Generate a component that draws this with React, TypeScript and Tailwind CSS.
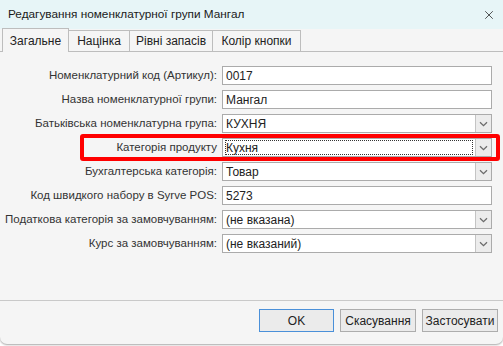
import { X } from 'lucide-react';

type Field = {
  label: string;
  value: string;
  combo?: boolean;
  focused?: boolean;
};

const fields: Field[] = [
  { label: 'Номенклатурний код (Артикул):', value: '0017' },
  { label: 'Назва номенклатурної групи:', value: 'Мангал' },
  { label: 'Батьківська номенклатурна група:', value: 'КУХНЯ', combo: true },
  { label: 'Категорія продукту', value: 'Кухня', combo: true, focused: true },
  { label: 'Бухгалтерська категорія:', value: 'Товар', combo: true },
  { label: 'Код швидкого набору в Syrve POS:', value: '5273' },
  { label: 'Податкова категорія за замовчуванням:', value: '(не вказана)', combo: true },
  { label: 'Курс за замовчуванням:', value: '(не вказаний)', combo: true },
];

const tabs = [
  { name: 'Загальне', w: 'w-[67px]' },
  { name: 'Націнка', w: 'w-[61px]' },
  { name: 'Рівні запасів', w: 'w-[83px]' },
  { name: 'Колір кнопки', w: 'w-[88px]' },
];

function Chevron() {
  return (
    <svg width="9" height="6" viewBox="0 0 9 6" fill="none">
      <path d="M1 1.2 L4.5 4.6 L8 1.2" stroke="#6b6b6b" strokeWidth="1.3" />
    </svg>
  );
}

function Row({ field }: { field: Field }) {
  return (
    <div className="relative flex items-center h-[19px]">
      <div className="w-[218px] shrink-0 pr-[1px] text-right text-[11.5px] text-[#333] whitespace-nowrap">
        {field.label}
      </div>
      <div className="ml-[4px] w-[270px] h-[19px] flex bg-white border border-[#ababab]">
        <div className="flex-1 flex items-center px-[2px] min-w-0">
          <div
            className={`flex-1 h-[15px] flex items-center text-[12px] text-[#222] leading-none pl-[1px] ${
              field.focused ? 'outline-1 outline-dotted outline-[#333] -outline-offset-1' : ''
            }`}
          >
            {field.value}
          </div>
        </div>
        {field.combo && (
          <div className="w-[16px] flex items-center justify-center bg-[#ececec] border-l border-[#c4c4c4]">
            <Chevron />
          </div>
        )}
      </div>
      {field.focused && (
        <div className="absolute left-[80px] top-[-4px] w-[420px] h-[27px] border-4 border-[#ff0000] rounded-[3px] pointer-events-none" />
      )}
    </div>
  );
}

export default function App() {
  return (
    <div className="w-[503px] h-[346px] bg-white overflow-hidden" style={{ fontFamily: '"Liberation Sans", Arial, sans-serif' }}>
      <div className="w-[503px] h-[344px] flex flex-col bg-[#f5f5f5] rounded-b-[7px] shadow-[0_1px_2px_rgba(0,0,0,0.35)] overflow-hidden">
        {/* Title bar */}
        <div className="h-[29px] shrink-0 flex items-center justify-between pl-[8px] pr-[7px] bg-[#e7f5f7]">
          <span className="text-[11.8px] text-[#1a1a1a]">Редагування номенклатурної групи Мангал</span>
          <X size={14} strokeWidth={1.3} className="text-[#222]" />
        </div>

        {/* Tabs */}
        <div className="h-[23px] shrink-0 flex items-end pl-[2px] border-b border-[#bdbdbd] bg-[#f5f5f5]">
          {tabs.map((t, i) =>
            i === 0 ? (
              <div
                key={t.name}
                className={`${t.w} h-[24px] -mb-px flex items-center justify-center border border-b-0 border-[#bdbdbd] bg-[#f5f5f5] text-[12px] text-[#222]`}
              >
                {t.name}
              </div>
            ) : (
              <div
                key={t.name}
                className={`${t.w} h-[21px] flex items-center justify-center border border-l-0 border-b-0 border-[#bdbdbd] bg-[#f5f5f5] text-[12px] text-[#222]`}
              >
                {t.name}
              </div>
            )
          )}
        </div>

        {/* Form */}
        <div className="flex flex-col gap-[5px] pt-[14px]">
          {fields.map((f) => (
            <Row key={f.label} field={f} />
          ))}
        </div>

        {/* Footer */}
        <div className="mt-auto border-t border-[#c9c9c9] h-[44px] flex items-start justify-end gap-[6px] pt-[8px] pr-[5px]">
          <button className="w-[75px] h-[23px] border border-[#4a90d9] bg-[#ebebeb] text-[12px] text-[#222]">OK</button>
          <button className="w-[76px] h-[23px] border border-[#adadad] bg-[#ebebeb] text-[12px] text-[#222]">Скасування</button>
          <button className="w-[76px] h-[23px] border border-[#adadad] bg-[#ebebeb] text-[12px] text-[#222]">Застосувати</button>
        </div>
      </div>
    </div>
  );
}
